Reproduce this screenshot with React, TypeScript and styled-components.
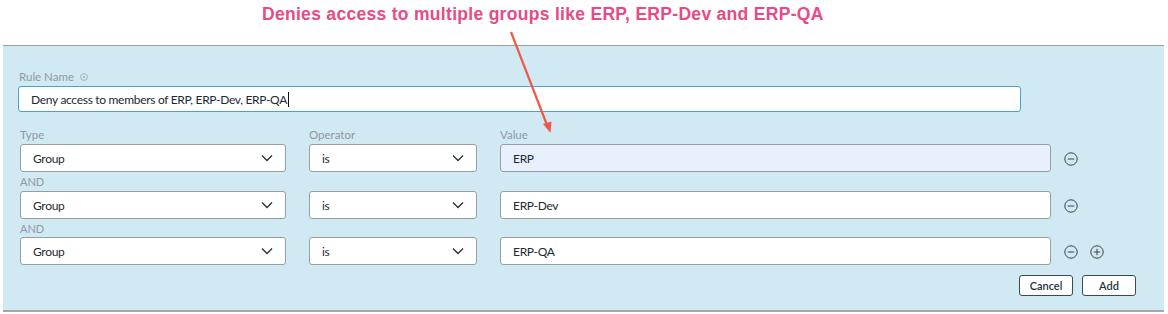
import * as React from "react";
import styled, { createGlobalStyle } from "styled-components";

const GlobalStyle = createGlobalStyle`
  html, body {
    margin: 0;
    padding: 0;
    background: #ffffff;
  }
  body {
    font-family: Lato, "Noto Sans", sans-serif;
  }
`;

const Page = styled.div`
  position: relative;
  width: 1168px;
  height: 314px;
  overflow: hidden;
`;

const Annotation = styled.div`
  height: 45px;
  box-sizing: border-box;
  padding: 3px 0 0 262px;
  font-family: "Liberation Sans", Arial, sans-serif;
  font-size: 17.5px;
  font-weight: 700;
  line-height: 22px;
  color: #e84a86;
  letter-spacing: 0.3px;
`;

const ArrowLayer = styled.svg`
  position: absolute;
  left: 0;
  top: 0;
  pointer-events: none;
`;

const Panel = styled.div`
  margin-left: 3px;
  width: 1161px;
  height: 267px;
  box-sizing: border-box;
  background: #d1e9f2;
  border-top: 1px solid #9c9c9c;
  border-bottom: 2px solid #a3a9ac;
  padding: 24px 0 0 16px;
`;

const Label = styled.div`
  display: flex;
  align-items: center;
  gap: 6px;
  height: 14px;
  font-size: 11.5px;
  line-height: 14px;
  color: #8e9aa2;
  margin-bottom: 2px;
`;

const InfoMark = styled.svg`
  width: 8px;
  height: 8px;
`;

const TextBox = styled.div<{ $focused?: boolean; $autofill?: boolean; $width: number }>`
  width: ${(p) => p.$width}px;
  height: 28px;
  box-sizing: border-box;
  border: 1px solid ${(p) => (p.$focused ? "#4aa2c6" : "#959ea4")};
  border-radius: 3px;
  background: ${(p) => (p.$autofill ? "#e8f0fe" : "#ffffff")};
  padding: 0 12px;
  display: flex;
  align-items: center;
  font-size: 12px;
  letter-spacing: -0.3px;
  color: #1d2a31;
`;

const Caret = styled.span`
  display: inline-block;
  width: 1px;
  height: 15px;
  background: #111;
  margin-left: 1px;
`;

const NameBox = styled(TextBox)`
  height: 26px;
  margin-left: -1px;
`;

const Grid = styled.div`
  display: grid;
  grid-template-columns: 266px 168px 551px auto;
  column-gap: 23px;
  margin-top: 16px;
  margin-left: 1px;
`;

const ColLabel = styled(Label)`
  margin-bottom: 2px;
`;

const AndLabel = styled.div<{ $h: number }>`
  grid-column: 1 / -1;
  height: ${(p) => p.$h}px;
  display: flex;
  align-items: center;
  font-size: 11px;
  color: #8e9aa2;
`;

const Select = styled.div`
  height: 28px;
  box-sizing: border-box;
  border: 1px solid #959ea4;
  border-radius: 3px;
  background: #ffffff;
  padding: 0 12px 0 12px;
  display: flex;
  align-items: center;
  justify-content: space-between;
  font-size: 12px;
  letter-spacing: -0.3px;
  color: #1d2a31;
`;

const Chevron = styled.svg`
  width: 12px;
  height: 8px;
`;

const Actions = styled.div`
  display: flex;
  align-items: center;
  gap: 12px;
  margin-left: -10px;
  padding-top: 2px;
`;

const IconButton = styled.svg`
  width: 14px;
  height: 14px;
`;

const Footer = styled.div`
  display: flex;
  justify-content: flex-end;
  gap: 9px;
  margin-top: 10px;
  padding-right: 28px;
`;

const Button = styled.button`
  width: 54px;
  height: 21px;
  box-sizing: border-box;
  border: 1px solid #3a4851;
  border-radius: 3px;
  background: #ffffff;
  font-family: Lato, "Noto Sans", sans-serif;
  font-size: 11px;
  font-weight: 600;
  color: #23323a;
  padding: 0;
`;

const ChevronIcon = () => (
  <Chevron viewBox="0 0 12 8">
    <path d="M1 1.5 L6 6.5 L11 1.5" fill="none" stroke="#2c3338" strokeWidth="1.4" />
  </Chevron>
);

const MinusIcon = () => (
  <IconButton viewBox="0 0 14 14">
    <circle cx="7" cy="7" r="6.2" fill="none" stroke="#3d4348" strokeWidth="1" />
    <path d="M3.8 7 H10.2" stroke="#3d4348" strokeWidth="1" />
  </IconButton>
);

const PlusIcon = () => (
  <IconButton viewBox="0 0 14 14">
    <circle cx="7" cy="7" r="6.2" fill="none" stroke="#3d4348" strokeWidth="1" />
    <path d="M3.8 7 H10.2 M7 3.8 V10.2" stroke="#3d4348" strokeWidth="1" />
  </IconButton>
);

const rules = [
  { type: "Group", op: "is", value: "ERP", autofill: true },
  { type: "Group", op: "is", value: "ERP-Dev" },
  { type: "Group", op: "is", value: "ERP-QA" },
];

export default function App() {
  return (
    <Page>
      <GlobalStyle />
      <Annotation>Denies access to multiple groups like ERP, ERP-Dev and ERP-QA</Annotation>
      <Panel>
        <Label>
          Rule Name
          <InfoMark viewBox="0 0 8 8">
            <circle cx="4" cy="4" r="3.4" fill="none" stroke="#9aa5ac" strokeWidth="0.8" />
            <circle cx="4" cy="4" r="1" fill="#9aa5ac" />
          </InfoMark>
        </Label>
        <NameBox $focused $width={1003}>
          Deny access to members of ERP, ERP-Dev, ERP-QA
          <Caret />
        </NameBox>
        <Grid>
          <ColLabel>Type</ColLabel>
          <ColLabel>Operator</ColLabel>
          <ColLabel>Value</ColLabel>
          <div />
          {rules.map((r, i) => (
            <React.Fragment key={r.value}>
              {i > 0 && <AndLabel $h={i === 1 ? 19 : 18}>AND</AndLabel>}
              <Select>
                {r.type}
                <ChevronIcon />
              </Select>
              <Select>
                {r.op}
                <ChevronIcon />
              </Select>
              <TextBox $width={551} $autofill={r.autofill}>
                {r.value}
              </TextBox>
              <Actions>
                <MinusIcon />
                {i === rules.length - 1 && <PlusIcon />}
              </Actions>
            </React.Fragment>
          ))}
        </Grid>
        <Footer>
          <Button>Cancel</Button>
          <Button>Add</Button>
        </Footer>
      </Panel>
      <ArrowLayer width="1168" height="314" viewBox="0 0 1168 314">
        <line x1="511" y1="32" x2="547" y2="125" stroke="#ee5a4a" strokeWidth="2.2" />
        <path d="M550.5 133 L543 124 L551.5 121.5 Z" fill="#ee5a4a" />
      </ArrowLayer>
    </Page>
  );
}
